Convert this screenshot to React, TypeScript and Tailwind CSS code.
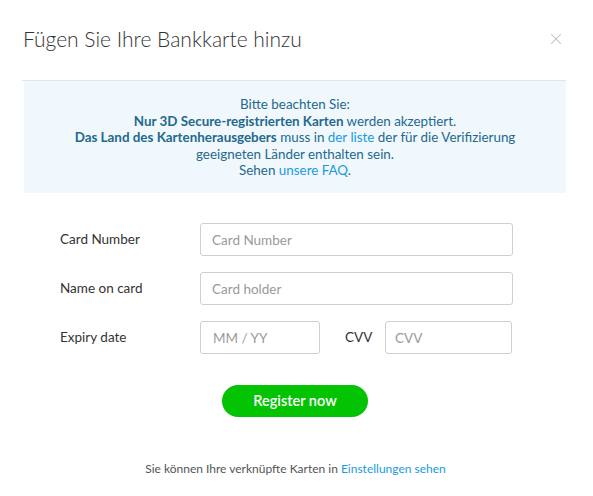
import { X } from 'lucide-react';

/* Add bank card modal — notice box, card form, register button */

const fields = [
  { label: 'Card Number', placeholder: 'Card Number' },
  { label: 'Name on card', placeholder: 'Card holder' },
];

export default function App() {
  return (
    <div
      className="w-[593px] h-[496px] bg-white text-[#333] overflow-hidden"
      style={{ fontFamily: 'Lato, "Open Sans", sans-serif' }}
    >
      {/* ── Header ───────────────────────────────────────── */}
      <div className="ml-[22px] mr-[27px] h-[81px] flex items-center justify-between border-b border-[#e3e6e8] pb-[2px]">
        <h1 className="text-[21px] font-light text-[#333] pl-[1px]">
          Fügen Sie Ihre Bankkarte hinzu
        </h1>
        <button className="text-[#bcbcbc] mr-[1px]" aria-label="Close">
          <X className="w-[18px] h-[18px]" strokeWidth={1.4} />
        </button>
      </div>

      {/* ── Notice ───────────────────────────────────────── */}
      <div className="ml-[24px] mr-[27px] h-[112px] bg-[#f0f8fd] pt-[15px] text-center text-[13.4px] leading-[16.5px] text-[#24698c]">
        <p>Bitte beachten Sie:</p>
        <p>
          <b className="font-bold">Nur 3D Secure-registrierten Karten</b> werden akzeptiert.
        </p>
        <p>
          <b className="font-bold">Das Land des Kartenherausgebers</b> muss in{' '}
          <a className="text-[#1a9bdc]">der liste</a> der für die Verifizierung
        </p>
        <p>geeigneten Länder enthalten sein.</p>
        <p>
          Sehen <a className="text-[#1a9bdc]">unsere FAQ</a>.
        </p>
      </div>

      {/* ── Form ─────────────────────────────────────────── */}
      <div className="mt-[30px] pl-[60px] flex flex-col gap-[16px] text-[13.5px]">
        {fields.map((f) => (
          <div key={f.label} className="flex items-center">
            <label className="w-[140px]">{f.label}</label>
            <input
              placeholder={f.placeholder}
              className="w-[313px] h-[33px] rounded-[3px] border border-[#cfcfcf] px-[11px] placeholder:text-[#9a9a9a] outline-none"
            />
          </div>
        ))}
        <div className="flex items-center">
          <label className="w-[140px]">Expiry date</label>
          <input
            placeholder="MM / YY"
            className="w-[120px] h-[33px] rounded-[3px] border border-[#cfcfcf] px-[12px] placeholder:text-[#9a9a9a] outline-none"
          />
          <span className="ml-[25px] w-[40px]">CVV</span>
          <input
            placeholder="CVV"
            className="w-[127px] h-[33px] rounded-[3px] border border-[#cfcfcf] px-[9px] placeholder:text-[#9a9a9a] outline-none"
          />
        </div>
      </div>

      {/* ── Submit ───────────────────────────────────────── */}
      <div className="mt-[31px] flex justify-center pr-[3px]">
        <button className="w-[146px] h-[32px] rounded-full bg-[#03c303] text-white text-[14.5px] font-semibold">
          Register now
        </button>
      </div>

      {/* ── Footer ───────────────────────────────────────── */}
      <p className="mt-[43px] text-center text-[12px] text-[#555] pr-[2px]">
        Sie können Ihre verknüpfte Karten in <a className="text-[#1a9bdc]">Einstellungen sehen</a>
      </p>
    </div>
  );
}
